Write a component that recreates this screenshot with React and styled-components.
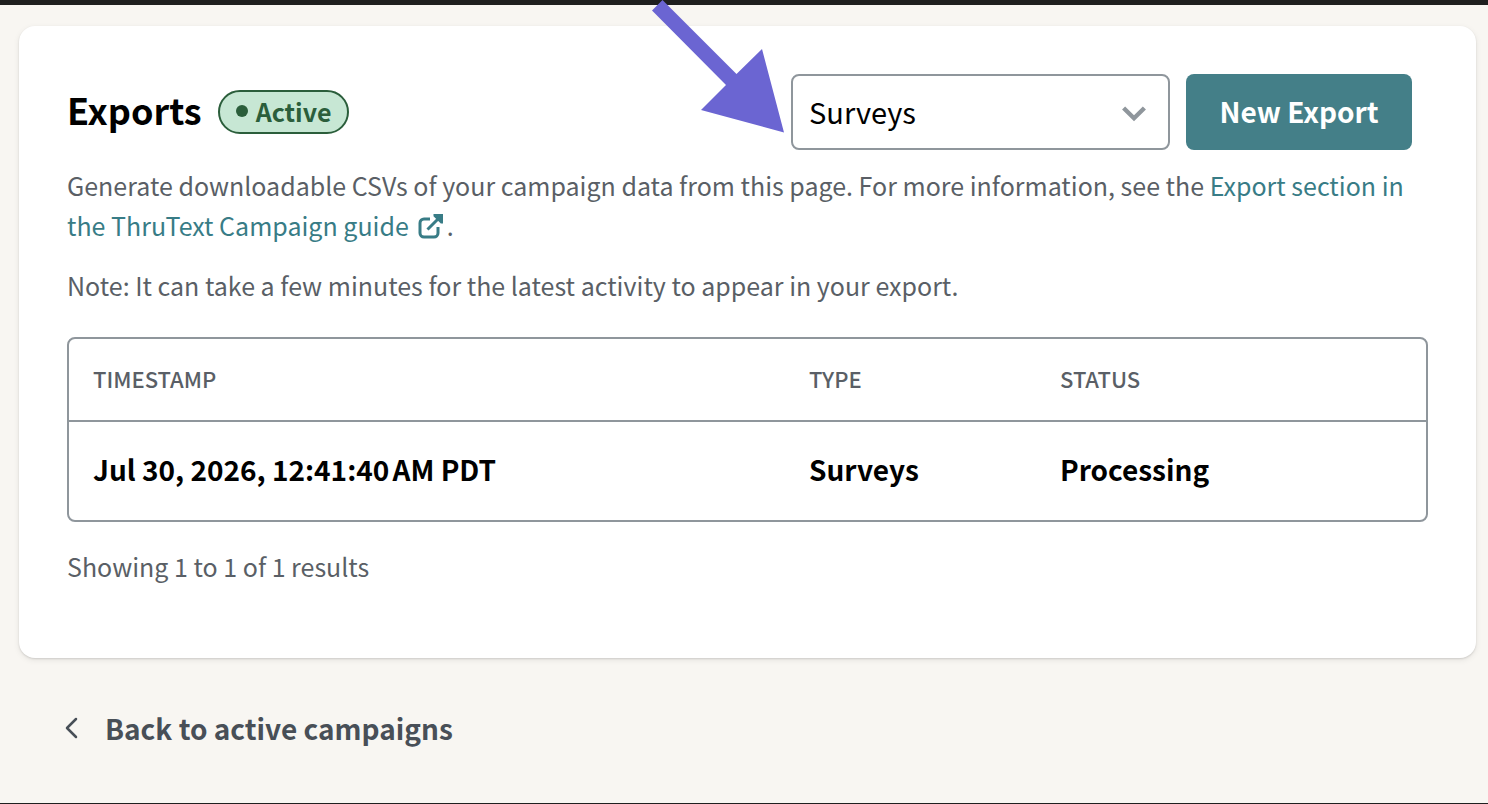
import React from "react";
import styled, { createGlobalStyle } from "styled-components";

const GlobalStyle = createGlobalStyle`
  *, *::before, *::after { box-sizing: border-box; }
  body {
    margin: 0;
    background: #f8f6f2;
    color: #000;
    font-family: "Noto Sans CJK JP", "Noto Sans", sans-serif;
    font-size: 25px;
    line-height: 40px;
  }
`;

const Page = styled.div`
  display: flex;
  flex-direction: column;
  min-height: 100vh;
  border-top: 5px solid #1f1f1f;
  border-bottom: 1px solid #1f1f1f;
`;

const Card = styled.main`
  margin: 21px 12px 0 19px;
  padding: 48px 48px 72px;
  background: #fff;
  border-radius: 16px;
  box-shadow: 0 1px 2px rgba(0, 0, 0, 0.12), 0 2px 6px rgba(0, 0, 0, 0.08);
`;

const Header = styled.header`
  display: flex;
  align-items: center;
  justify-content: space-between;
  gap: 16px;
  margin-bottom: 15px;
  padding-right: 16px;
`;

const TitleGroup = styled.div`
  display: flex;
  align-items: center;
  gap: 16px;
`;

const Title = styled.h1`
  margin: 0;
  padding-bottom: 6px;
  font-size: 36px;
  font-weight: 700;
  line-height: 44px;
`;

const Badge = styled.span`
  display: flex;
  align-items: center;
  gap: 8px;
  height: 44px;
  padding: 0 16px 2px;
  border: 2px solid #2b5e3b;
  border-radius: 22px;
  background: #c7e7d4;
  color: #2b5e3b;
  font-weight: 700;

  &::before {
    content: "";
    width: 12px;
    height: 12px;
    border-radius: 50%;
    background: currentColor;
  }
`;

const Actions = styled.div`
  display: flex;
  gap: 16px;
`;

const SelectField = styled.div`
  position: relative;
  width: 379px;
`;

const Select = styled.select`
  appearance: none;
  width: 100%;
  height: 76px;
  padding: 0 56px 3px 16px;
  border: 2px solid #8f969c;
  border-radius: 8px;
  background: #fff;
  color: #000;
  font: inherit;
  font-size: 29px;
`;

const SelectChevron = styled.svg`
  position: absolute;
  top: 32px;
  right: 24px;
  pointer-events: none;
`;

const PointerArrow = styled.svg`
  position: absolute;
  top: -74px;
  right: 100%;
  pointer-events: none;
`;

const PrimaryButton = styled.button`
  min-width: 226px;
  height: 76px;
  padding: 0 32px 2px;
  border: 0;
  border-radius: 8px;
  background: #447f88;
  color: #fff;
  font: inherit;
  font-size: 28px;
  font-weight: 700;
`;

const Paragraph = styled.p`
  margin: 0 0 20px;
  color: #5a5f66;
`;

const TextLink = styled.a`
  color: #387c86;
  text-decoration: none;

  svg {
    margin: 0 3px 0 9px;
    vertical-align: -3px;
  }
`;

const TableFrame = styled.div`
  margin: 32px 0 24px;
  border: 2px solid #8f969c;
  border-radius: 8px;
`;

const Table = styled.table`
  width: 100%;
  border-collapse: collapse;
  table-layout: fixed;
  text-align: left;
`;

const HeadCell = styled.th`
  width: ${(p) => p.$width};
  height: 82px;
  padding: 0 24px 3px;
  color: #5a5f66;
  font-size: 22px;
  font-weight: 500;
  text-transform: uppercase;
`;

const Cell = styled.td`
  height: 99px;
  padding: 0 24px 4px;
  border-top: 2px solid #8f969c;
  font-size: 28px;
  font-weight: 700;
`;

const ResultCount = styled.p`
  margin: 0;
  color: #5a5f66;
`;

const BackLink = styled.a`
  display: flex;
  align-items: center;
  align-self: flex-start;
  gap: 27px;
  margin: 50px 64px;
  color: #484f57;
  font-size: 28px;
  font-weight: 700;
  text-decoration: none;
`;

const exportsList = [
  { timestamp: "Jul 30, 2026, 12:41:40\u202fAM PDT", type: "Surveys", status: "Processing" },
];

export default function App() {
  return (
    <>
      <GlobalStyle />
      <Page>
        <Card>
          <Header>
            <TitleGroup>
              <Title>Exports</Title>
              <Badge>Active</Badge>
            </TitleGroup>
            <Actions>
              <SelectField>
                <Select aria-label="Export type" defaultValue="Surveys">
                  <option>Surveys</option>
                </Select>
                <SelectChevron width="24" height="16" viewBox="0 0 24 16" fill="none" aria-hidden="true">
                  <path d="M1.6 2 12 12.2 22.4 2" stroke="#8f969c" strokeWidth="4.4" />
                </SelectChevron>
                <PointerArrow width="139" height="133" viewBox="0 0 139 133" aria-hidden="true">
                  <path d="M0 10.5 10.5 0 84.5 74 110 49 132 132.5 49 110 74 85Z" fill="#6b65d2" />
                </PointerArrow>
              </SelectField>
              <PrimaryButton type="button">New Export</PrimaryButton>
            </Actions>
          </Header>
          <Paragraph>
            Generate downloadable CSVs of your campaign data from this page. For more information, see the{" "}
            <TextLink href="#guide">
              Export section in the ThruText Campaign guide
              <svg width="26" height="26" viewBox="0 0 26 26" fill="none" stroke="currentColor" strokeWidth="3" aria-hidden="true">
                <path d="M12 6H6a4 4 0 0 0-4 4v10a4 4 0 0 0 4 4h10a4 4 0 0 0 4-4v-6" />
                <path d="M9.5 16.5 22 4" />
                <path d="M15.5 1H25v9.5h-2.2L15.5 3.2Z" fill="currentColor" stroke="none" />
              </svg>
            </TextLink>
            .
          </Paragraph>
          <Paragraph>Note: It can take a few minutes for the latest activity to appear in your export.</Paragraph>
          <TableFrame>
            <Table>
              <thead>
                <tr>
                  <HeadCell scope="col" $width="auto">Timestamp</HeadCell>
                  <HeadCell scope="col" $width="251px">Type</HeadCell>
                  <HeadCell scope="col" $width="390px">Status</HeadCell>
                </tr>
              </thead>
              <tbody>
                {exportsList.map((row) => (
                  <tr key={row.timestamp}>
                    <Cell>{row.timestamp}</Cell>
                    <Cell>{row.type}</Cell>
                    <Cell>{row.status}</Cell>
                  </tr>
                ))}
              </tbody>
            </Table>
          </TableFrame>
          <ResultCount>Showing 1 to 1 of 1 results</ResultCount>
        </Card>
        <BackLink href="#campaigns">
          <svg width="14" height="22" viewBox="0 0 14 22" fill="none" aria-hidden="true">
            <path d="M12 2 3 11l9 9" stroke="currentColor" strokeWidth="2.5" strokeLinecap="round" strokeLinejoin="round" />
          </svg>
          Back to active campaigns
        </BackLink>
      </Page>
    </>
  );
}
